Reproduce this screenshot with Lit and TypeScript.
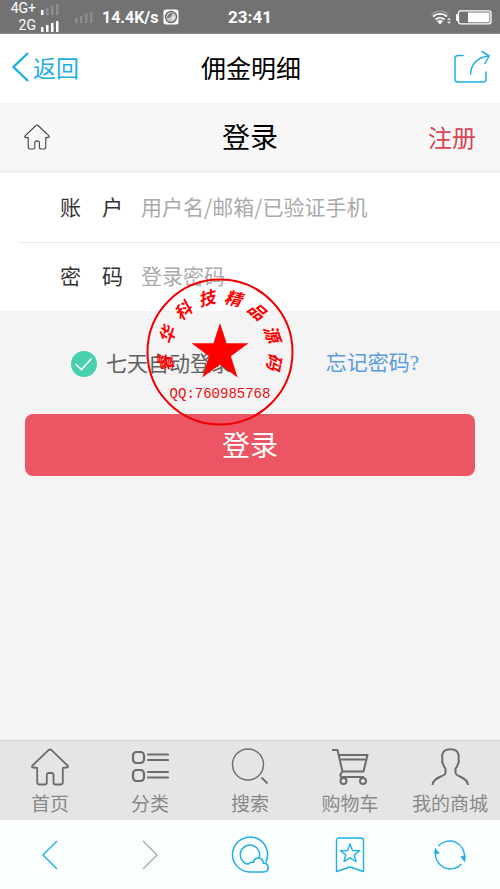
import { LitElement, html, css, svg } from "lit";
import { customElement, state } from "lit/decorators.js";

const cjk = css`"Noto Sans CJK SC", "Noto Sans", sans-serif`;

@customElement("status-bar")
class StatusBar extends LitElement {
  static styles = css`
    :host {
      display: grid;
      grid-template-columns: 1fr auto 1fr;
      align-items: center;
      height: 34px;
      box-sizing: border-box;
      padding: 0 8px;
      background: #727272;
      box-shadow: inset 0 -1px #8a8a8a;
      color: #fff;
      font-family: Roboto, sans-serif;
    }
    .left,
    .right {
      display: flex;
      align-items: center;
    }
    .right {
      justify-content: flex-end;
      gap: 4px;
    }
    .sims {
      display: grid;
      grid-template-columns: 28px 20px;
      column-gap: 4px;
      align-items: center;
      justify-items: end;
      font-size: 14px;
      line-height: 17px;
    }
    .second {
      margin-left: 14px;
    }
    .speed {
      margin-left: 8px;
      margin-right: 4px;
      font-size: 16px;
      font-weight: 700;
    }
    .time {
      font-size: 17px;
      font-weight: 700;
    }
    svg {
      display: block;
    }
  `;

  private bars(levels: number[]) {
    return html`<svg width="20" height="14" viewBox="0 0 20 14">
      ${levels.map(
        (o, i) => svg`<rect x=${i * 5 + 1} y=${8 - i * 2} width="2.500" height=${5 + i * 2} fill="#fff" fill-opacity=${o}/>`
      )}
    </svg>`;
  }

  render() {
    return html`
      <div class="left">
        <div class="sims">
          <span>4G+</span>${this.bars([1, 0.2, 0.2, 0.2])}
          <span>2G</span>${this.bars([1, 1, 1, 1])}
        </div>
        <div class="second">${this.bars([0.2, 0.2, 0.2, 0.2])}</div>
        <span class="speed">14.4K/s</span>
        <svg width="16" height="16" viewBox="0 0 16 16">
          <rect x="0.500" y="0.500" width="15" height="15" rx="2.500" fill="#fff" />
          <circle cx="8" cy="8" r="5.600" fill="#c4c4c4" stroke="#606060" stroke-width="1.200" />
          <path d="M4 9.500C4 6 6.500 4 10 4L7.500 8z" fill="#777" />
          <path d="M8 9.500L12 6.500 11 11z" fill="#eee" />
        </svg>
      </div>
      <span class="time">23:41</span>
      <div class="right">
        <svg width="22" height="18" viewBox="0 0 22 18" fill="none" stroke="#fff">
          <path d="M1.500 6.500a12.500 12.500 0 0 1 17 0" stroke-width="1.500" opacity="0.3" />
          <path d="M3 8.500a10.500 10.500 0 0 1 14 0" stroke-width="1.800" />
          <path d="M5.500 11.500a6.800 6.800 0 0 1 9 0" stroke-width="1.800" />
          <path d="M7 13.300a4.500 4.500 0 0 1 6 0L10 16.500z" fill="#fff" stroke="none" />
          <path d="M19 9.500l2 2.500h-4zM19 16l2-2.500h-4z" fill="#ddd" stroke="none" />
        </svg>
        <svg width="36" height="15" viewBox="0 0 36 15">
          <rect x="2.500" y="0.800" width="32.500" height="13" rx="2" fill="none" stroke="#fff" stroke-width="1.300" />
          <path d="M2 4.500H0.500v6H2z" fill="#fff" stroke="#fff" />
          <rect x="12" y="2.500" width="21.500" height="9.800" fill="#fff" />
        </svg>
      </div>
    `;
  }
}

@customElement("company-seal")
class CompanySeal extends LitElement {
  static styles = css`
    :host {
      display: block;
      pointer-events: none;
    }
    svg {
      display: block;
    }
    .arc {
      font: italic 700 17px ${cjk};
    }
    .qq {
      font: 14px "Liberation Mono", monospace;
    }
  `;

  private chars: [string, number][] = [
    ["睿", -102], ["华", -72], ["科", -42], ["技", -14],
    ["精", 14], ["品", 42], ["源", 71], ["码", 100],
  ];

  render() {
    return html`<svg width="148" height="148" viewBox="-74 -74 148 148" fill="#f00">
      <circle r="72.500" fill="none" stroke="#f00000" stroke-width="2" />
      <path d="M0-29L6.600-8.800H28.500L10.900 4.200 17.600 25.500 0 12.600-17.600 25.500-10.900 4.200-28.500-8.800H-6.600z" />
      ${this.chars.map(
        ([c, a]) => svg`<text class="arc" transform=${`rotate(${a})`} y="-49" text-anchor="middle">${c}</text>`
      )}
      <text class="qq" y="46" text-anchor="middle" fill="#e81010">QQ:760985768</text>
    </svg>`;
  }
}

@customElement("app-root")
class AppRoot extends LitElement {
  @state() private remember = true;

  static styles = css`
    :host {
      display: flex;
      flex-direction: column;
      min-height: 100vh;
      background: #f4f4f4;
      color: #000;
      font-family: ${cjk};
      font-weight: 400;
    }
    * {
      box-sizing: border-box;
    }
    svg {
      display: block;
      fill: none;
      stroke: currentColor;
    }
    button,
    input {
      margin: 0;
      padding: 0;
      border: 0;
      background: none;
      font: inherit;
      color: inherit;
    }
    a {
      color: inherit;
      text-decoration: none;
    }
    h1,
    h2 {
      margin: 0;
      font-weight: 400;
    }
    .bar {
      display: grid;
      grid-template-columns: 1fr auto 1fr;
      align-items: center;
    }
    .bar > :last-child {
      justify-self: end;
    }
    .header {
      height: 69px;
      padding: 0 10px 3px 12px;
      background: #fff;
    }
    .header h1 {
      font-size: 25px;
      line-height: 36px;
    }
    .back {
      display: flex;
      align-items: center;
      gap: 4px;
      color: #1eaee5;
      font-size: 23px;
      line-height: 36px;
    }
    .share {
      color: #1eaee5;
    }
    .subheader {
      height: 70px;
      padding: 0 24px;
      background: #f7f7f7;
      border-bottom: 3px solid #efefef;
    }
    .subheader h2 {
      font-size: 28px;
      line-height: 40px;
      padding-bottom: 2px;
    }
    .home {
      color: #444;
    }
    .register {
      color: #da4453;
      font-size: 24px;
      line-height: 36px;
    }
    .form {
      position: relative;
      font-size: 21px;
      line-height: 32px;
    }
    .fields {
      background: #fff;
      padding-left: 18px;
    }
    .row {
      display: flex;
      align-items: center;
      gap: 18px;
      height: 69px;
      padding-left: 42px;
      padding-bottom: 4px;
      color: #333;
    }
    .row + .row {
      border-top: 1px solid #e8e8e8;
    }
    .row label {
      white-space: pre;
    }
    .row input {
      flex: 1;
      min-width: 0;
      height: 32px;
      outline: none;
    }
    .row input::placeholder {
      color: #aaa;
      opacity: 1;
    }
    .options {
      display: flex;
      justify-content: space-between;
      align-items: center;
      padding: 34px 81px 0 71px;
    }
    .options span,
    .forgot {
      padding-bottom: 4px;
    }
    .remember {
      display: grid;
      grid-template-columns: 26px auto;
      column-gap: 9px;
      align-items: center;
      color: #606060;
    }
    .remember input {
      grid-area: 1 / 1;
      appearance: none;
      width: 26px;
      height: 26px;
      border-radius: 50%;
      background: #ccc;
    }
    .remember input:checked {
      background: #48cfad;
    }
    .remember svg {
      grid-area: 1 / 1;
      pointer-events: none;
      color: #fff;
    }
    .forgot {
      color: #5a9be2;
    }
    .mark {
      font-family: "Liberation Serif", serif;
    }
    .submit {
      display: block;
      width: calc(100% - 50px);
      height: 62px;
      margin: 31px 25px 0;
      padding-bottom: 3px;
      border-radius: 8px;
      background: #ec5564;
      color: #fff;
      font-size: 28px;
      line-height: 40px;
    }
    .seal {
      position: absolute;
      top: 105px;
      left: calc(50% - 104px);
    }
    .main {
      flex: 1;
    }
    .tabs,
    .browser {
      display: grid;
      grid-template-columns: repeat(5, 1fr);
      justify-items: center;
    }
    .tabs {
      height: 80px;
      padding-top: 7px;
      background: #e5e5e5;
      border-top: 1px solid #d0d0d0;
      color: #888;
      font-size: 19px;
      line-height: 28px;
    }
    .tabs a {
      display: flex;
      flex-direction: column;
      align-items: center;
      gap: 3px;
      white-space: nowrap;
    }
    .tabs svg {
      color: #6c6c6c;
    }
    .browser {
      height: 69px;
      align-items: center;
      background: #fbfefe;
      color: #1eaee5;
    }
    .browser .forward {
      color: #aaa;
    }
  `;

  private house(size: number, weight: number) {
    return html`<svg width=${size} height=${size} viewBox="0 0 38 38" stroke-width=${weight} stroke-linejoin="round">
      <path
        d="M17.500 2.200Q19 .8 20.500 2.200L36.500 17.500Q37.800 19.500 35.500 19.500L31.800 19.900V34Q31.800 36.500 29.500 36.500H24.500Q22.500 36.500 22.500 34.500V27Q22.500 25 20.500 25H17.700Q15.800 25 15.800 27V34.500Q15.800 36.500 13.800 36.500H8.500Q6.200 36.500 6.200 34V19.900L2.500 19.500Q.2 19.500 1.500 17.500Z"
      />
    </svg>`;
  }

  render() {
    return html`
      <status-bar></status-bar>
      <header class="bar header">
        <a class="back" href="#back">
          <svg width="17" height="30" viewBox="0 0 17 30" stroke-width="2.400">
            <path d="M16 1L1.500 15 16 29" />
          </svg>
          返回
        </a>
        <h1>佣金明细</h1>
        <button class="share" aria-label="分享">
          <svg width="36" height="34" viewBox="0 0 36 34" stroke-width="1.500" stroke-linecap="round" stroke-linejoin="round">
            <path d="M9 5.500H4Q1 5.500 1 8.500V29Q1 32 4 32H29Q32 32 32 29V22" />
            <path d="M16.500 24C17 13.500 24 7 35 6M28 1.500L35.200 6 31 13.500" />
          </svg>
        </button>
      </header>
      <div class="bar subheader">
        <a class="home" href="#home" aria-label="首页">${this.house(26, 1.6)}</a>
        <h2>登录</h2>
        <a class="register" href="#register">注册</a>
      </div>
      <main class="main">
        <form class="form" @submit=${(e: Event) => e.preventDefault()}>
          <div class="fields">
            <div class="row">
              <label for="account">账　户</label>
              <input id="account" type="text" placeholder="用户名/邮箱/已验证手机" />
            </div>
            <div class="row">
              <label for="password">密　码</label>
              <input id="password" type="password" placeholder="登录密码" />
            </div>
          </div>
          <div class="options">
            <label class="remember">
              <input
                type="checkbox"
                .checked=${this.remember}
                @change=${(e: Event) => (this.remember = (e.target as HTMLInputElement).checked)}
              />
              <svg width="26" height="26" viewBox="0 0 26 26" stroke-width="1.600">
                <path d="M4.500 13L10.500 18.500 20.500 7.500" />
              </svg>
              <span>七天自动登录</span>
            </label>
            <a class="forgot" href="#forgot">忘记密码<span class="mark">?</span></a>
          </div>
          <button class="submit" type="submit">登录</button>
          <company-seal class="seal"></company-seal>
        </form>
      </main>
      <nav class="tabs">
        <a href="#home">${this.house(38, 1.8)}首页</a>
        <a href="#category">
          <svg width="38" height="38" viewBox="0 0 38 38" stroke-width="2.200">
            <rect x="2" y="4" width="11" height="11" rx="3.500" />
            <rect x="2" y="22" width="11" height="11" rx="3.500" />
            <path d="M17 6.500H37M17 12H37M17 24H37M17 29.500H37" stroke-linecap="round" />
          </svg>
          分类
        </a>
        <a href="#search">
          <svg width="38" height="38" viewBox="0 0 38 38" stroke-width="1.400">
            <circle cx="17" cy="16.500" r="15.500" />
            <path d="M30.500 29.500L36.500 35.500" stroke-width="1.800" />
          </svg>
          搜索
        </a>
        <a href="#cart">
          <svg width="38" height="38" viewBox="0 0 38 38" stroke-width="2" stroke-linejoin="round">
            <path d="M1 2H6.500L11.500 23.500H32.500L36.500 7H8M9 11.500H35M11.500 23.500Q8.500 26 10 29H33" />
            <circle cx="12.500" cy="33" r="3" />
            <circle cx="32" cy="33" r="3" />
          </svg>
          购物车
        </a>
        <a href="#mine">
          <svg width="38" height="38" viewBox="0 0 38 38" stroke-width="2">
            <path
              d="M1.500 37C2 28.500 14 29 14.500 25V20.500C12.500 19 12.500 17.500 12 15.500Q10.500 14 11.500 12C10 4.500 13 1.200 19.500 1.200S28.500 4.500 27.500 12Q28.500 14 27 15.500C26.500 17.500 26.500 19 24.500 20.500V25C25 29 36.500 28.500 37 37"
            />
          </svg>
          我的商城
        </a>
      </nav>
      <footer class="browser">
        <button aria-label="后退">
          <svg width="16" height="30" viewBox="0 0 16 30" stroke-width="1.400"><path d="M15 1L1 15 15 29" /></svg>
        </button>
        <button class="forward" aria-label="前进">
          <svg width="16" height="30" viewBox="0 0 16 30" stroke-width="1.400"><path d="M1 1L15 15 1 29" /></svg>
        </button>
        <button aria-label="浏览器">
          <svg width="38" height="38" viewBox="0 0 38 38" stroke-width="1.500" stroke-linejoin="round">
            <path
              d="M34.700 26.300A17.500 17.500 0 1 0 19 36H32.500C35.500 36 37.200 34 37.200 31.600C37.200 28.500 35 27 32.500 27.300C31.500 20.500 22.500 20.500 22.500 26.500Q19.500 25.500 17.500 28Q14.500 28.500 12.500 26A9.700 9.700 0 1 1 28.300 21.500"
            />
          </svg>
        </button>
        <button aria-label="书签">
          <svg width="30" height="36" viewBox="0 0 30 36" stroke-width="1.400" stroke-linejoin="round">
            <path d="M4 1H26Q28.500 1 28.500 3.500V34.500L15 30 1.500 34.500V3.500Q1.500 1 4 1Z" />
            <path d="M15 7L17.500 13.500 24.500 13.700 19.200 18 21 24.500 15 20.800 9 24.500 10.800 18 5.500 13.700 12.500 13.500Z" />
          </svg>
        </button>
        <button aria-label="刷新">
          <svg width="34" height="34" viewBox="0 0 34 34" stroke-width="1.400">
            <path d="M5.500 8A15 15 0 0 1 31.500 20M28.500 26A15 15 0 0 1 2.500 14" />
            <path d="M28.500 19L31.500 22.500 32 18.500ZM5.500 15L2.500 11.500 2 15.500Z" fill="currentColor" />
          </svg>
        </button>
      </footer>
    `;
  }
}
